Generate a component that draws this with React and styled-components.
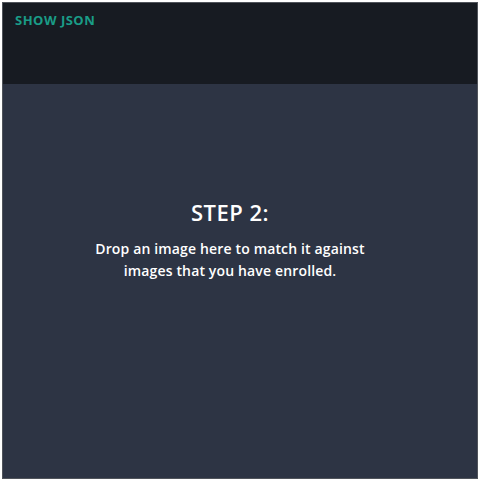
import React from "react";
import styled, { createGlobalStyle } from "styled-components";

const Global = createGlobalStyle`
  html, body { margin: 0; padding: 0; background: #ffffff; }
  body { font-family: "Open Sans", Lato, sans-serif; }
`;

const Frame = styled.div`
  box-sizing: border-box;
  margin: 2px 0 0 2px;
  width: 476px;
  height: 477px;
  border: 1px solid #50545b;
  display: flex;
  flex-direction: column;
  background: #2d3444;
`;

const Header = styled.div`
  height: 81px;
  background: #171b22;
  padding: 5px 12px;
  box-sizing: border-box;
  flex-shrink: 0;
`;

const JsonLink = styled.a`
  font-family: "Open Sans", sans-serif;
  font-weight: 700;
  font-size: 13px;
  letter-spacing: 0.5px;
  color: #1a9c87;
  text-decoration: none;
  cursor: pointer;
`;

const DropZone = styled.div`
  flex: 1;
  display: flex;
  flex-direction: column;
  align-items: center;
  padding: 114px 20px 0 0;
  color: #ffffff;
  text-align: center;
`;

const Title = styled.h2`
  margin: 0 0 12px;
  font-family: "Open Sans", sans-serif;
  font-weight: 600;
  font-size: 22px;
  letter-spacing: 0.5px;
  line-height: 28px;
`;

const Message = styled.p`
  margin: 0;
  font-family: "Open Sans", sans-serif;
  font-weight: 600;
  font-size: 14px;
  letter-spacing: 0.15px;
  line-height: 22px;
  max-width: 290px;
`;

export default function App() {
  return (
    <>
      <Global />
      <Frame>
        <Header>
          <JsonLink>SHOW JSON</JsonLink>
        </Header>
        <DropZone>
          <Title>STEP 2:</Title>
          <Message>Drop an image here to match it against images that you have enrolled.</Message>
        </DropZone>
      </Frame>
    </>
  );
}
